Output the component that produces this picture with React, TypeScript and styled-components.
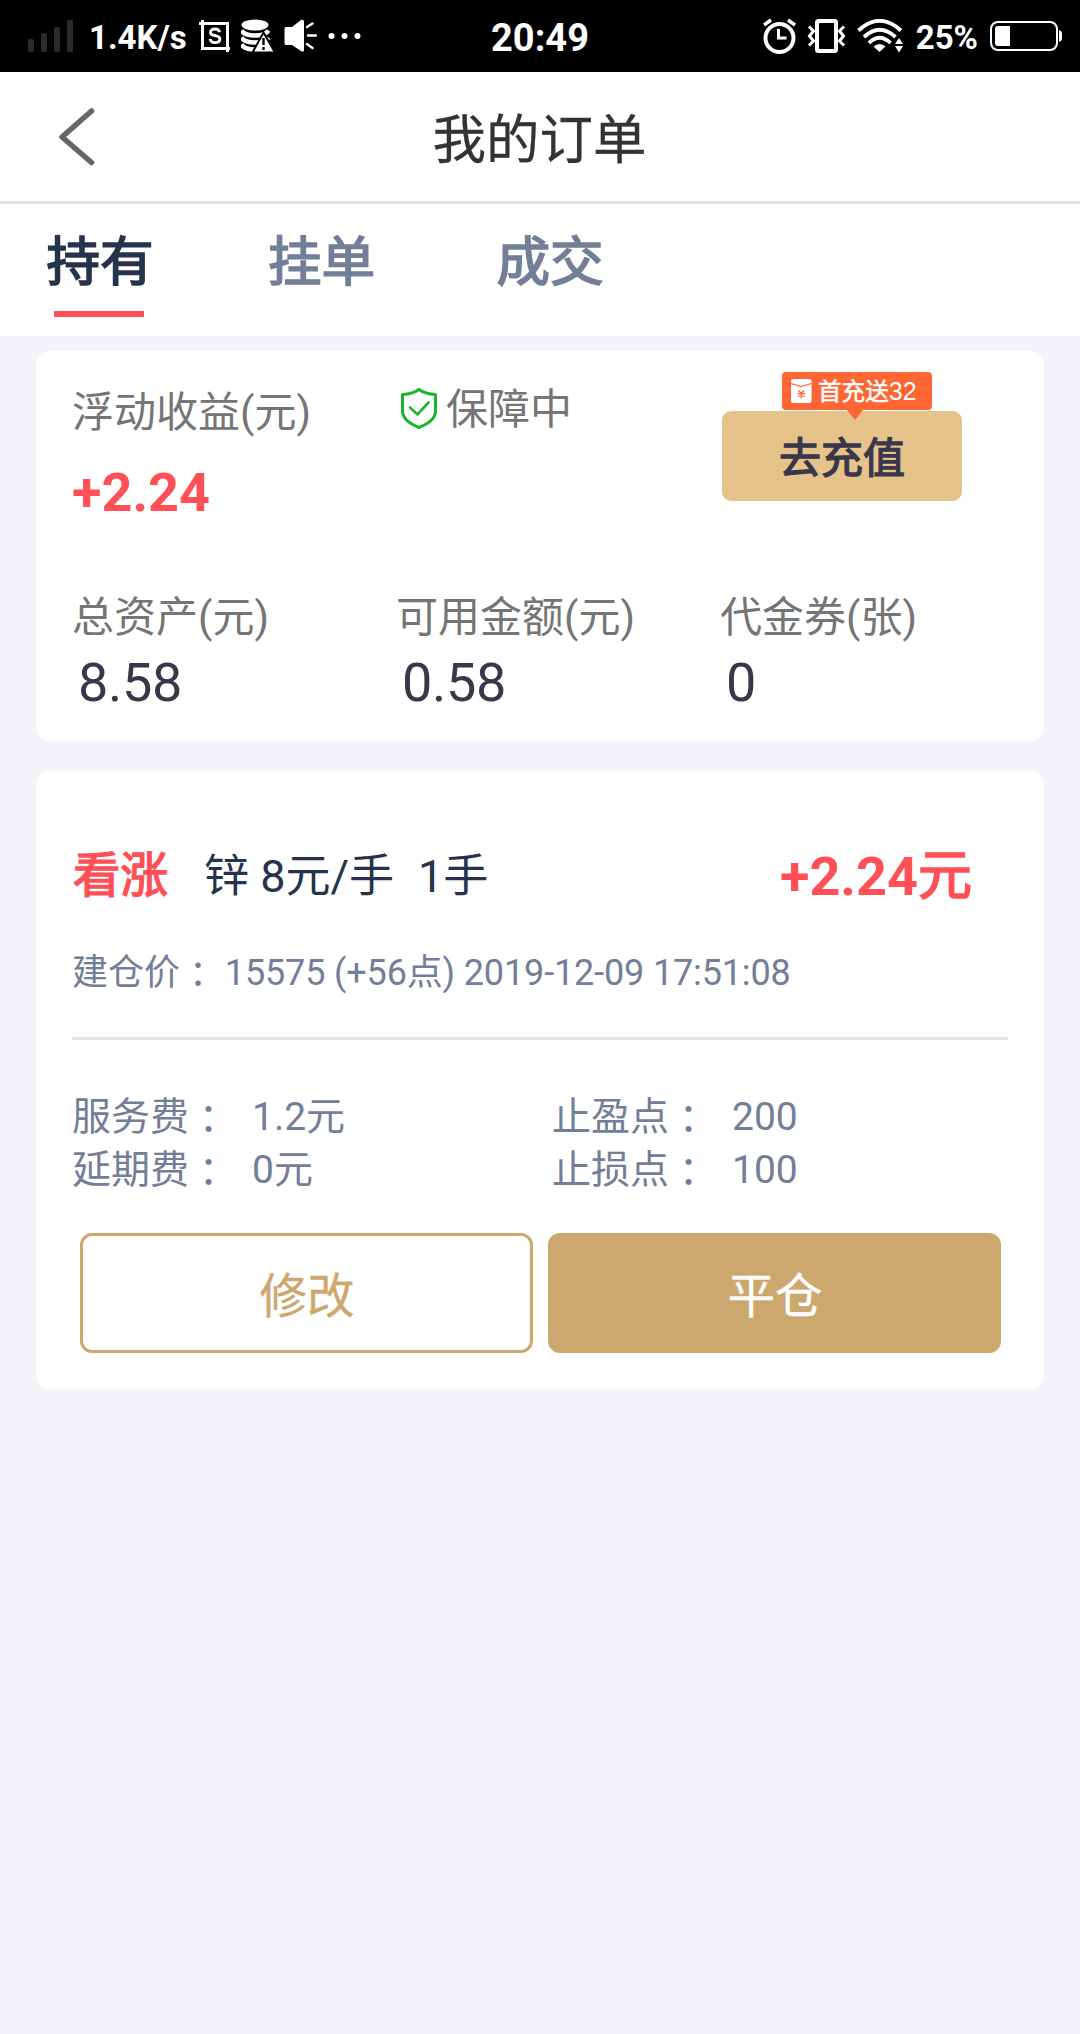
import React from "react";
import styled, { createGlobalStyle, css } from "styled-components";

const GlobalStyle = createGlobalStyle`
  * { box-sizing: border-box; }
  html, body { margin: 0; padding: 0; background: #f5f4f9; }
  body { font-family: Roboto, "Noto Sans CJK SC", sans-serif; }
`;

const color = {
  navy: "#26334c",
  slate: "#737e98",
  label: "#757575",
  ink: "#39374a",
  red: "#ff5058",
  gold: "#cca86f",
  line: "#e5e5e5",
};

/* Single-weight CJK glyphs are thickened with an outline. */
const thick = css`
  font-weight: 400;
  -webkit-text-stroke: 0.032em currentColor;
`;

const Screen = styled.div`
  width: 1080px;
  min-height: 2034px;
  background: #f5f4f9;
`;

const StatusBar = styled.header`
  display: grid;
  grid-template-columns: 1fr auto 1fr;
  height: 72px;
  background: #000;
  color: #fff;
  font-weight: 700;
`;

const StatusSide = styled.div<{ $end?: boolean }>`
  display: flex;
  align-items: flex-start;
  justify-content: ${(p) => (p.$end ? "flex-end" : "flex-start")};
  padding: ${(p) => (p.$end ? "0 17px 0 0" : "0 0 0 26px")};
`;

const StatusText = styled.span<{ $size: number; $top: number; $gap?: number }>`
  font-size: ${(p) => p.$size}px;
  line-height: 40px;
  margin-top: ${(p) => p.$top}px;
  margin-left: ${(p) => p.$gap ?? 0}px;
  white-space: nowrap;
`;

const Icon = styled.svg<{ $top?: number; $left?: number }>`
  display: block;
  flex: none;
  margin-top: ${(p) => p.$top ?? 0}px;
  margin-left: ${(p) => p.$left ?? 0}px;
`;

const TitleBar = styled.div`
  display: grid;
  grid-template-columns: 160px 1fr 160px;
  height: 132px;
  background: #fff;
  border-bottom: 3px solid ${color.line};
`;

const Title = styled.h1`
  margin: 0;
  padding: 42px 1px 0 0;
  text-align: center;
  font-size: 53.5px;
  line-height: 54px;
  font-weight: 400;
  color: #333;
  -webkit-text-stroke: 0.3px currentColor;
`;

const Tabs = styled.nav`
  display: flex;
  height: 132px;
  padding: 32px 0 0 45px;
  background: #fff;
`;

const Tab = styled.div<{ $active?: boolean; $gap?: number; $indent?: number }>`
  ${thick}
  display: flex;
  flex-direction: column;
  align-items: center;
  width: 108px;
  margin-left: ${(p) => p.$gap ?? 0}px;
  font-size: 53.6px;
  line-height: 54px;
  text-indent: ${(p) => p.$indent ?? 0}px;
  white-space: nowrap;
  color: ${(p) => (p.$active ? color.navy : color.slate)};
  &::after {
    content: "";
    width: 90px;
    height: 6px;
    margin-top: 21px;
    background: ${(p) => (p.$active ? color.red : "transparent")};
  }
`;

const Card = styled.section<{ $height: number; $top: number }>`
  height: ${(p) => p.$height}px;
  margin: ${(p) => p.$top}px 36px 0;
  padding: 0 36px;
  background: #fff;
  border-radius: 14px;
`;

const Summary = styled.div`
  display: grid;
  grid-template-columns: 324px 324px 1fr;
  height: 246px;
`;

const Totals = styled.div`
  display: grid;
  grid-template-columns: 324px 324px 1fr;
`;

const Label = styled.div`
  font-size: 42px;
  line-height: 42px;
  color: ${color.label};
  white-space: nowrap;
`;

const Value = styled.div`
  margin-top: 17px;
  padding-left: 6px;
  font-size: 54px;
  line-height: 54px;
  letter-spacing: -0.3px;
  color: ${color.ink};
`;

const ProfitCell = styled.div`
  padding-top: 41px;
`;

const Profit = styled.div`
  margin-top: 32px;
  font-size: 54px;
  line-height: 54px;
  font-weight: 700;
  color: ${color.red};
`;

const GuardCell = styled.div`
  display: flex;
  align-items: flex-start;
  gap: 8px;
  padding: 36px 0 0 4px;
`;

const GuardLabel = styled(Label)`
  padding-top: 2px;
`;

const RechargeCell = styled.div`
  padding: 60px 0 0 2px;
`;

const RechargeButton = styled.button`
  ${thick}
  position: relative;
  display: block;
  width: 240px;
  height: 90px;
  padding: 6px 0 0;
  border: 0;
  border-radius: 9px;
  background: #e5c38b;
  color: ${color.ink};
  font-family: inherit;
  font-size: 42px;
  line-height: 42px;
`;

const Badge = styled.span`
  position: absolute;
  left: 60px;
  top: -39px;
  display: flex;
  align-items: center;
  width: 150px;
  height: 38px;
  padding-left: 9px;
  border-radius: 4px;
  background: #ff6633;
  color: #fff;
  font-size: 23.6px;
  line-height: 24px;
  -webkit-text-stroke: 0.5px currentColor;
  &::after {
    content: "";
    position: absolute;
    left: 65px;
    top: 38px;
    border: 8px solid transparent;
    border-top: 10px solid #ff6633;
    border-bottom: 0;
  }
`;

const BadgeText = styled.span`
  padding: 1px 0 0 6px;
  white-space: nowrap;
`;

const BadgeNumber = styled.span`
  font-family: "Liberation Sans", sans-serif;
  font-size: 25px;
  -webkit-text-stroke: 0;
`;

const OrderHead = styled.div`
  display: flex;
  height: 184px;
  padding-top: 79px;
`;

const Direction = styled.span`
  ${thick}
  width: 96px;
  margin-top: 2px;
  padding-left: 1px;
  font-size: 47.5px;
  line-height: 48px;
  color: ${color.red};
`;

const Product = styled.span`
  margin: 4px 0 0 36px;
  font-size: 45px;
  line-height: 45px;
  color: ${color.navy};
  white-space: pre;
`;

const Lots = styled(Product)`
  flex: 1;
  margin-left: 24px;
`;

const OrderProfit = styled.span`
  margin-right: 36px;
  font-size: 54px;
  line-height: 54px;
  font-weight: 700;
  color: ${color.red};
`;

const Unit = styled.span`
  ${thick}
`;

const OpenPrice = styled.div`
  height: 82px;
  font-size: 36px;
  line-height: 37px;
  color: ${color.slate};
  white-space: nowrap;
`;

const Figures = styled.span`
  letter-spacing: -0.14px;
`;

const ColonMark = styled.span`
  font-family: "Noto Sans CJK TC", sans-serif;
  line-height: 0;
  vertical-align: -0.08em;
`;

const Divider = styled.hr`
  height: 3px;
  margin: 0;
  border: 0;
  background: ${color.line};
`;

const Terms = styled.dl`
  display: grid;
  grid-template-columns: 180px 300px 180px 1fr;
  height: 193px;
  margin: 0;
  padding-top: 51px;
  grid-auto-rows: 53px;
  font-size: 39px;
  line-height: 53px;
  color: ${color.slate};
`;

const Term = styled.dt`
  white-space: nowrap;
`;

const TermValue = styled.dd`
  margin: 0;
`;

const Actions = styled.div`
  display: grid;
  grid-template-columns: 1fr 1fr;
  gap: 15px;
  padding: 0 7px 0 8px;
`;

const ActionButton = styled.button<{ $filled?: boolean }>`
  height: 120px;
  padding: 7px 0 0 1px;
  border: 3px solid ${color.gold};
  border-radius: 12px;
  background: ${(p) => (p.$filled ? color.gold : "#fff")};
  color: ${(p) => (p.$filled ? "#fff" : color.gold)};
  font-family: inherit;
  font-size: 47.5px;
  line-height: 48px;
  -webkit-text-stroke: 0.3px currentColor;
`;

const SignalIcon = () => (
  <Icon width="50" height="36" $top={18} $left={0}>
    <g fill="#2b2b2b">
      <rect x="2" y="21" width="6" height="13" rx="2" />
      <rect x="15" y="15" width="6" height="19" rx="2" />
      <rect x="28" y="9" width="6" height="25" rx="2" />
      <rect x="41" y="2" width="6" height="32" rx="2" />
    </g>
  </Icon>
);

const ScreenshotIcon = () => (
  <Icon width="32" height="33" viewBox="0 0 32 33" $top={20} $left={12} fill="none" stroke="#fff">
    <path d="M3.5 0V28.5H31M0 3.5H28.5V32" strokeWidth="3" />
    <path
      d="M20.600 12.200C20 9.800 18.400 9 16 9C13.300 9 11.500 10.300 11.500 12.400C11.500 17 20.900 14.400 20.900 19C20.900 21.400 18.800 22.600 16.200 22.600C13.300 22.600 11.400 21.400 11 19"
      strokeWidth="2.900"
    />
  </Icon>
);

const DataWarningIcon = () => (
  <Icon width="33" height="34" viewBox="0 0 33 34" $top={19} $left={10}>
    <ellipse cx="14" cy="6" rx="13.500" ry="5.500" fill="#fff" />
    <g fill="none" stroke="#fff" strokeWidth="4.400">
      <path d="M.5 11.500C3 15.500 9 16.500 14 16.500S25 15.500 27.500 11.500" />
      <path d="M.5 18.500C3 22.500 9 23.500 14 23.500S25 22.500 27.500 18.500" />
      <path d="M.5 25.500C3 29.500 9 30.500 14 30.500H17" />
    </g>
    <path d="M22.500 13.500L34 33.500H11.500Z" fill="#fff" stroke="#000" strokeWidth="2" />
    <path d="M22.500 19V26M22.500 28V31" stroke="#000" strokeWidth="2.400" />
  </Icon>
);

const SpeakerIcon = () => (
  <Icon width="33" height="34" viewBox="0 0 33 34" $top={19} $left={10}>
    <path d="M2 8H8L17 1Q20 0 20 3V31Q20 34 17 32L8 26H2Q.5 26 .5 24V10Q.5 8 2 8Z" fill="#fff" />
    <path d="M23 8L28.500 4.500M24 16.500H32M23 25L28.500 29" stroke="#fff" strokeWidth="2.400" strokeLinecap="round" />
  </Icon>
);

const MoreDots = () => (
  <Icon width="34" height="8" $top={32} $left={11} fill="#fff">
    <circle cx="3.500" cy="4" r="3" />
    <circle cx="16.500" cy="4" r="3" />
    <circle cx="29.500" cy="4" r="3" />
  </Icon>
);

const AlarmIcon = () => (
  <Icon width="34" height="36" viewBox="0 0 34 36" $top={18} fill="none" stroke="#fff">
    <circle cx="16.500" cy="20" r="14" strokeWidth="4" />
    <path d="M15.500 11V20H23.500" strokeWidth="3" />
    <path d="M1 7L8 2M25 2L32 7" strokeWidth="3.400" />
  </Icon>
);

const VibrateIcon = () => (
  <Icon width="40" height="36" viewBox="0 0 40 36" $top={18} $left={10} fill="none" stroke="#fff">
    <rect x="10" y="3" width="19" height="30" rx="1.500" strokeWidth="4" />
    <path d="M2 8.500L6.500 13L2.500 18L6.500 23L2 27.500M37 8.500L32.500 13L36.500 18L32.500 23L37 27.500" strokeWidth="3" />
  </Icon>
);

const WifiIcon = () => (
  <Icon width="48" height="34" viewBox="0 0 48 34" $top={19} $left={10} fill="none" stroke="#fff">
    <path d="M1.500 11.500Q22.500 -8 44 11.500" strokeWidth="3.800" />
    <path d="M7 18Q22.500 3.500 38.500 18" strokeWidth="3.800" />
    <path d="M12 24Q22.500 13.500 33.500 24" strokeWidth="3.800" />
    <path d="M16.500 27.500Q22.500 22.500 28.500 27.500L22.500 33Z" fill="#fff" stroke="none" />
    <path d="M38 25L42 19L46 25ZM38 27L42 33.500L46 27Z" fill="#fff" stroke="none" />
  </Icon>
);

const BatteryIcon = () => (
  <Icon width="73" height="31" viewBox="0 0 73 31" $top={21} $left={12}>
    <rect x="1" y="1" width="66" height="28" rx="7" fill="none" stroke="#fff" strokeWidth="2" />
    <path d="M8 5H20V25H8Q5 25 5 22V8Q5 5 8 5Z" fill="#fff" />
    <path d="M69 9Q72 10 72 12V18Q72 20 69 21Z" fill="#fff" />
  </Icon>
);

const BackIcon = () => (
  <Icon width="44" height="62" viewBox="0 0 44 62" $top={34} $left={55}>
    <path
      d="M36.500 5L7 31L36.500 56.500"
      fill="none"
      stroke="#666"
      strokeWidth="5.500"
      strokeLinecap="round"
      strokeLinejoin="round"
    />
  </Icon>
);

const ShieldIcon = () => (
  <Icon width="38" height="43" viewBox="0 0 38 43" fill="none" stroke="#18b52f">
    <path
      d="M19 2.500C15 5.500 9.500 7 2.500 7.500V24C2.500 31.500 9 36.500 19 40.500C29 36.500 35.500 31.500 35.500 24V7.500C28.500 7 23 5.500 19 2.500Z"
      strokeWidth="3"
      strokeLinejoin="round"
    />
    <path d="M10 20.500L17.500 27.500L28.500 15.500" strokeWidth="2.600" strokeLinecap="round" />
  </Icon>
);

const EnvelopeIcon = () => (
  <Icon width="21" height="25" viewBox="0 0 21 25">
    <path d="M2 0H18Q20.500 0 20.500 2V22Q20.500 24 18 24H2.500Q0 24 0 22V2Q0 0 2 0Z" fill="#fff" />
    <path d="M0 4.500L10.200 7.500L20.500 4.500" fill="none" stroke="#ff6633" strokeWidth="1.200" />
    <path
      d="M7.500 11.500L10.200 14.500L13 11.500M6.500 14.600H14M6.500 17H14M10.200 14.500V19.500"
      fill="none"
      stroke="#ff6633"
      strokeWidth="1.200"
    />
  </Icon>
);

const Colon = () => <ColonMark lang="zh-TW">：</ColonMark>;

const totals = [
  { label: "总资产(元)", value: "8.58" },
  { label: "可用金额(元)", value: "0.58" },
  { label: "代金券(张)", value: "0" },
];

const terms = [
  { name: "服务费", value: "1.2元" },
  { name: "止盈点", value: "200" },
  { name: "延期费", value: "0元" },
  { name: "止损点", value: "100" },
];

export default function App() {
  return (
    <Screen lang="zh-CN">
      <GlobalStyle />
      <StatusBar>
        <StatusSide>
          <SignalIcon />
          <StatusText $size={33} $top={18} $gap={13}>1.4K/s</StatusText>
          <ScreenshotIcon />
          <DataWarningIcon />
          <SpeakerIcon />
          <MoreDots />
        </StatusSide>
        <StatusText $size={38} $top={18}>20:49</StatusText>
        <StatusSide $end>
          <AlarmIcon />
          <VibrateIcon />
          <WifiIcon />
          <StatusText $size={33} $top={18} $gap={11}>25%</StatusText>
          <BatteryIcon />
        </StatusSide>
      </StatusBar>

      <TitleBar>
        <BackIcon />
        <Title>我的订单</Title>
      </TitleBar>

      <Tabs>
        <Tab $active $indent={2}>持有</Tab>
        <Tab $gap={114} $indent={1}>挂单</Tab>
        <Tab $gap={121}>成交</Tab>
      </Tabs>

      <Card $height={390} $top={15}>
        <Summary>
          <ProfitCell>
            <Label>浮动收益(元)</Label>
            <Profit>+2.24</Profit>
          </ProfitCell>
          <GuardCell>
            <ShieldIcon />
            <GuardLabel>保障中</GuardLabel>
          </GuardCell>
          <RechargeCell>
            <RechargeButton>
              去充值
              <Badge>
                <EnvelopeIcon />
                <BadgeText>
                  首充送<BadgeNumber>32</BadgeNumber>
                </BadgeText>
              </Badge>
            </RechargeButton>
          </RechargeCell>
        </Summary>
        <Totals>
          {totals.map((t) => (
            <div key={t.label}>
              <Label>{t.label}</Label>
              <Value>{t.value}</Value>
            </div>
          ))}
        </Totals>
      </Card>

      <Card $height={618} $top={30}>
        <OrderHead>
          <Direction>看涨</Direction>
          <Product>锌 8元/手</Product>
          <Lots>1手</Lots>
          <OrderProfit>
            +2.24<Unit>元</Unit>
          </OrderProfit>
        </OrderHead>
        <OpenPrice>
          建仓价
          <Colon />
          <Figures> 15575 (+56点) 2019-12-09 17:51:08</Figures>
        </OpenPrice>
        <Divider />
        <Terms>
          {terms.map((t) => (
            <React.Fragment key={t.name}>
              <Term>
                {t.name}
                <Colon />
              </Term>
              <TermValue>{t.value}</TermValue>
            </React.Fragment>
          ))}
        </Terms>
        <Actions>
          <ActionButton>修改</ActionButton>
          <ActionButton $filled>平仓</ActionButton>
        </Actions>
      </Card>
    </Screen>
  );
}
